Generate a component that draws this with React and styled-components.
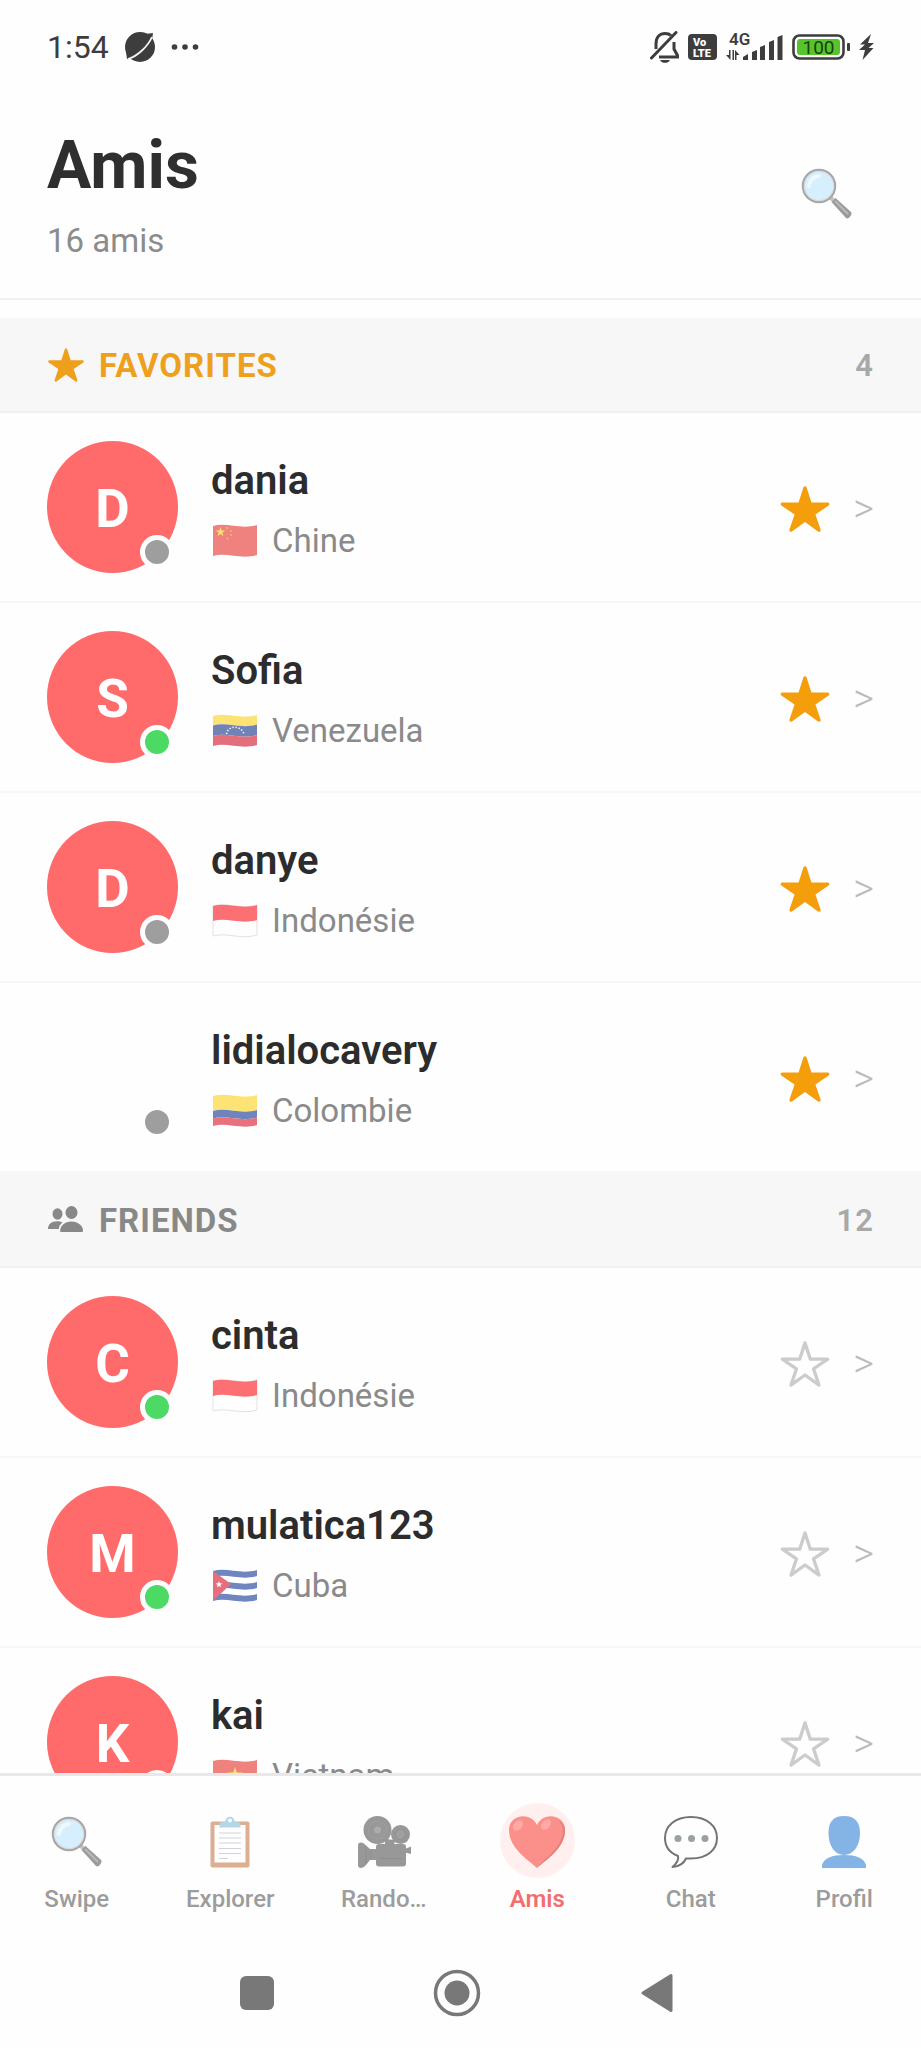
import React, { useState } from "react";
import styled, { createGlobalStyle } from "styled-components";
import { IoStar, IoStarOutline } from "react-icons/io5";

const GlobalStyle = createGlobalStyle`
  * {
    box-sizing: border-box;
  }
  body {
    margin: 0;
    background: #fefefe;
    font-family: Roboto, "Noto Sans", sans-serif;
  }
  button {
    padding: 0;
    border: none;
    background: transparent;
    font-family: inherit;
    cursor: pointer;
  }
  a {
    color: inherit;
    text-decoration: none;
  }
  svg {
    display: block;
    flex-shrink: 0;
  }
`;

const Screen = styled.div`
  display: flex;
  flex-direction: column;
  height: 100vh;
  overflow: hidden;
`;

const StatusBar = styled.div`
  display: flex;
  align-items: center;
  justify-content: space-between;
  flex-shrink: 0;
  height: 94px;
  padding: 0 47px;
  color: #3d3d3d;
`;

const StatusGroup = styled.div`
  display: flex;
  align-items: center;
  gap: ${({ $gap }) => $gap}px;
`;

const Clock = styled.time`
  font-size: 32px;
  line-height: 36px;
`;

const Header = styled.header`
  display: flex;
  align-items: center;
  justify-content: space-between;
  flex-shrink: 0;
  padding: 33px 47px 37px;
  border-bottom: 2px solid #f0f0f0;
`;

const Title = styled.h1`
  margin: 0 0 16px;
  font-size: 66px;
  font-weight: 700;
  line-height: 78px;
  color: #2f2f2f;
`;

const Subtitle = styled.p`
  margin: 0;
  font-size: 33px;
  line-height: 40px;
  color: #8c8c8c;
`;

const SearchButton = styled.button`
  display: flex;
  align-items: center;
  justify-content: center;
  width: 94px;
  height: 94px;
`;

const ListArea = styled.main`
  flex: 1;
  min-height: 0;
  padding-top: 18px;
  overflow-y: auto;
  scrollbar-width: none;
`;

const SectionHeader = styled.div`
  display: flex;
  align-items: center;
  justify-content: space-between;
  height: 95px;
  padding: 3px 47px 0;
  background: #f7f7f7;
  border-bottom: 2px solid #f0f0f0;
`;

const SectionTitle = styled.h2`
  display: flex;
  align-items: center;
  gap: 14px;
  margin: 0;
  font-size: 33px;
  font-weight: 700;
  line-height: 40px;
  text-transform: uppercase;
  letter-spacing: 1px;
  color: ${({ $color }) => $color};

  svg {
    margin-bottom: 3px;
  }
`;

const SectionCount = styled.span`
  font-size: 31px;
  font-weight: 600;
  line-height: 36px;
  letter-spacing: 1px;
  color: #a8a8a8;
`;

const List = styled.ul`
  margin: 0;
  padding: 0;
  list-style: none;
`;

const Row = styled.li`
  display: flex;
  align-items: center;
  height: 190px;
  padding: 0 47px;
  border-bottom: 2px solid #f7f7f7;
`;

const FriendLink = styled.a`
  display: flex;
  flex: 1;
  align-items: center;
  min-width: 0;
  gap: 33px;
`;

const Avatar = styled.div`
  position: relative;
  display: flex;
  align-items: center;
  justify-content: center;
  flex-shrink: 0;
  width: 131px;
  height: 132px;
  padding-top: 4px;
  border-radius: 50%;
  background: ${({ $blank }) => ($blank ? "transparent" : "#ff6b6b")};
  color: #fff;
  font-size: 53px;
  font-weight: 700;
`;

const Presence = styled.span`
  position: absolute;
  right: 4px;
  bottom: 4px;
  width: 34px;
  height: 34px;
  border: 5px solid #fefefe;
  border-radius: 50%;
  background: ${({ $online }) => ($online ? "#4cd964" : "#9e9e9e")};
`;

const Info = styled.div`
  padding-top: 3px;
`;

const Name = styled.div`
  margin-bottom: 16px;
  font-size: 40px;
  font-weight: 600;
  line-height: 48px;
  color: #2c2c2c;
`;

const Country = styled.div`
  display: flex;
  align-items: center;
  gap: 13px;
  font-size: 33px;
  line-height: 40px;
  color: #8a8a8a;
`;

const Actions = styled.div`
  display: flex;
  align-items: center;
  gap: 22px;
  padding-top: 3px;
`;

const StarButton = styled.button`
  display: flex;
  align-items: center;
  justify-content: center;
  width: 52px;
  height: 52px;
  color: ${({ $active }) => ($active ? "#f59e0b" : "#cccccc")};
`;

const Chevron = styled.span`
  font-size: 40px;
  line-height: 48px;
  font-weight: 300;
  color: #bbb;
`;

const TabBar = styled.nav`
  display: grid;
  grid-template-columns: repeat(6, 1fr);
  flex-shrink: 0;
  padding: 27px 0 24px;
  border-top: 3px solid #e8e8e8;
`;

const Tab = styled.a`
  display: flex;
  flex-direction: column;
  align-items: center;
  gap: 7px;
  font-size: 24px;
  font-weight: ${({ $active }) => ($active ? 600 : 500)};
  line-height: 28px;
  color: ${({ $active }) => ($active ? "#f0706f" : "#9c9c9c")};
`;

const TabIcon = styled.span`
  display: flex;
  align-items: center;
  justify-content: center;
  width: 75px;
  height: 75px;
  padding-top: 3px;
  border-radius: 50%;
  background: ${({ $active }) => ($active ? "#fff0ef" : "transparent")};
`;

const SystemBar = styled.div`
  display: flex;
  align-items: center;
  justify-content: center;
  flex-shrink: 0;
  gap: 140px;
  height: 111px;
  padding-right: 8px;
`;

const SystemButton = styled.button`
  display: flex;
  align-items: center;
  justify-content: center;
  width: 60px;
  height: 60px;
`;

/* status bar icons */

const PlanetIcon = () => (
  <svg width="32" height="32" viewBox="0 0 32 32">
    <circle cx="16" cy="16" r="15" fill="#3d3d3d" />
    <path d="M2 21L3 28L12 26ZM21 3L29 2L28 9Z" fill="#3d3d3d" />
    <path d="M4 28C14 25 24 15 28 6" fill="none" stroke="#f4f4f4" strokeWidth="1.8" />
  </svg>
);

const DotsIcon = () => (
  <svg width="28" height="8" viewBox="0 0 28 8" fill="#3d3d3d">
    <circle cx="3.5" cy="4" r="2.8" />
    <circle cx="14" cy="4" r="2.8" />
    <circle cx="24.5" cy="4" r="2.8" />
  </svg>
);

const MutedBellIcon = () => (
  <svg width="30" height="32" viewBox="0 0 30 32">
    <path d="M6 18V13C6 6 10 2.5 15 2.5C17.500 2.500 19.500 3 21 4.500" fill="none" stroke="#3d3d3d" strokeWidth="3" />
    <path d="M24 11V18L27.500 24.500V26H9" fill="none" stroke="#3d3d3d" strokeWidth="3" />
    <path d="M1.500 27L26 1.500" stroke="#3d3d3d" strokeWidth="3" strokeLinecap="round" />
    <path d="M10 29H20C19 31 17 31.800 15 31.800S11 31 10 29Z" fill="#3d3d3d" />
  </svg>
);

const VolteIcon = () => (
  <svg width="30" height="26" viewBox="0 0 30 26" fontFamily="Roboto, sans-serif" fontWeight="900">
    <rect width="29" height="26" rx="4" fill="#3d3d3d" />
    <text x="5" y="12" fontSize="11" fill="#fff">Vo</text>
    <text x="5" y="22.500" fontSize="11" fill="#fff">LTE</text>
  </svg>
);

const SignalIcon = () => (
  <svg width="58" height="38" viewBox="0 -4 58 38" fill="#3d3d3d">
    <text x="3" y="13" fontSize="17" fontWeight="600" fontFamily="Roboto, sans-serif">4G</text>
    <path d="M4.500 18V28L0 23H3V18ZM8 18V28H6.500V18ZM9 28V18L13.500 23H10.500V28Z" />
    <path d="M17 28V25L22 22V28Z" />
    <path d="M26 28V20L31 18V28Z" />
    <path d="M34 28V15L39 13V28Z" />
    <path d="M43 28V10L48 8V28Z" />
    <path d="M51.500 28V5L56.500 3V28Z" />
  </svg>
);

const BatteryIcon = () => (
  <svg width="59" height="26" viewBox="0 0 59 26">
    <rect x="1.500" y="1.500" width="50" height="23" rx="6" fill="#fff" stroke="#3d3d3d" strokeWidth="2.600" />
    <rect x="5" y="5" width="43" height="16" rx="3" fill="#56c52b" />
    <rect x="55" y="9" width="3" height="8" rx="1" fill="#3d3d3d" />
    <text x="26.500" y="20" fontSize="19" textAnchor="middle" fontFamily="Roboto, sans-serif" fill="#1f3d14">
      100
    </text>
  </svg>
);

const BoltIcon = () => (
  <svg width="15" height="26" viewBox="0 0 15 26">
    <path d="M12 0L1 10.500H6L0 16H6L3.500 26L14.500 14H9.500L15 9H9Z" fill="#3d3d3d" />
  </svg>
);

const PeopleIcon = () => (
  <svg width="38" height="28" viewBox="-1 0 38 28" fill="#888888">
    <ellipse cx="9.500" cy="8" rx="5" ry="5.700" />
    <ellipse cx="23.500" cy="6.500" rx="6" ry="6.500" />
    <path d="M0 23C0 18 4 15.300 9 15.300C11 15.300 13 15.800 14.500 16.500C12 18.500 11 20 10.800 23Z" />
    <path d="M12.300 26C11.500 20 17 15.500 23.500 15.500S35.500 20 35 25Q35 26 34 26Z" />
  </svg>
);

/* flags: every stripe is a band between two parallel waves */

const band = (top, bottom) =>
  `M0 ${top + 1}C14 ${top - 3} 28 ${top + 5} 44 ${top}V${bottom}C28 ${bottom + 5} 14 ${bottom - 3} 0 ${bottom + 1}Z`;

const StarShape = ({ x, y, r, fill }) => {
  const points = Array.from({ length: 10 }, (_, i) => {
    const radius = i % 2 ? r * 0.4 : r;
    const angle = (Math.PI / 5) * i - Math.PI / 2;
    return `${x + radius * Math.cos(angle)},${y + radius * Math.sin(angle)}`;
  }).join(" ");
  return <polygon points={points} fill={fill} />;
};

const flags = {
  cn: (
    <>
      <path d={band(1, 31)} fill="#ef827e" />
      <StarShape x={7.5} y={8} r={5} fill="#fbe073" />
      <circle cx="14" cy="4" r="1" fill="#f8b56f" />
      <circle cx="18" cy="7" r="1" fill="#f8b56f" />
      <circle cx="18" cy="11" r="1" fill="#f8b56f" />
      <circle cx="14.500" cy="14.500" r="1" fill="#f8b56f" />
    </>
  ),
  ve: (
    <>
      <path d={band(1, 10.5)} fill="#fce373" />
      <path d={band(10.5, 21)} fill="#7182b7" />
      <path d={band(21, 31)} fill="#e36f7d" />
      <path d="M13.500 20C15 11 28 11 31 20" fill="none" stroke="#fff" strokeWidth="1.600" strokeDasharray="1.300 1.800" />
    </>
  ),
  id: (
    <>
      <path d={band(1, 31)} fill="#fefefe" stroke="#e2e2e2" />
      <path d={band(1, 16)} fill="#fc7074" />
    </>
  ),
  co: (
    <>
      <path d={band(1, 16)} fill="#fce373" />
      <path d={band(16, 23.5)} fill="#6f83bd" />
      <path d={band(23.5, 31)} fill="#e9707d" />
    </>
  ),
  cu: (
    <>
      <path d={band(1, 31)} fill="#fefefe" />
      <path d={band(1, 7)} fill="#6f86bf" />
      <path d={band(13, 19)} fill="#6f86bf" />
      <path d={band(25, 31)} fill="#6f86bf" />
      <path d="M0 2L18 15L0 32Z" fill="#e66f7e" />
      <StarShape x={6} y={15.5} r={3.5} fill="#fff" />
    </>
  ),
  vn: (
    <>
      <path d={band(1, 31)} fill="#ef827e" />
      <StarShape x={22} y={16} r={8} fill="#fbe073" />
    </>
  ),
};

const Flag = ({ code }) => (
  <svg width="48" height="34" viewBox="-2 0 48 34">{flags[code]}</svg>
);

/* emoji style icons */

const MagnifierIcon = () => (
  <svg width="52" height="52" viewBox="0 0 52 52">
    <path d="M29 29L33 33" stroke="#c4c4c4" strokeWidth="4" />
    <path d="M30.500 34L34.500 30L50 44C52 46 47.500 52 45 50Z" fill="#9b9b9b" />
    <path d="M34 33L47 46" stroke="#b9b9b9" strokeWidth="2" />
    <circle cx="18" cy="18" r="16" fill="#d5efff" stroke="#a6a6a6" strokeWidth="2.500" />
    <circle cx="18" cy="18" r="14.700" fill="none" stroke="#d9d9d9" strokeWidth="1.200" />
    <path d="M8 18C9 12 13 8.500 18 8" fill="none" stroke="#edf9ff" strokeWidth="4" strokeLinecap="round" />
  </svg>
);

const ClipboardIcon = () => (
  <svg width="52" height="52" viewBox="0 0 52 52">
    <rect x="6.500" y="5.500" width="39" height="46" rx="2" fill="#dcae92" />
    <rect x="10.500" y="9" width="31" height="37.500" fill="#fefefe" />
    <path d="M15 17H37M15 22H37M15 27H37M15 32.500H37M15 37.500H37M15 42.500H24" stroke="#d0d4d8" strokeWidth="1.200" />
    <path d="M15.500 11.500V8Q16 6 19 6H21.500C21.500 -1 30.500 -1 30.500 6H33Q36 6 36.500 8V11.500Z" fill="#b4d5e4" />
    <circle cx="26" cy="4.500" r="2" fill="#fefefe" />
  </svg>
);

const CameraIcon = () => (
  <svg width="54" height="52" viewBox="0 0 54 52">
    <g fill="#989898">
      <circle cx="20.500" cy="14" r="14" />
      <circle cx="43.500" cy="18.500" r="9.500" />
      <path d="M28 23L38 24L37 30H28Z" />
      <rect x="19" y="28" width="30" height="22.500" rx="3" />
      <path d="M1 29Q1 26.500 4 26.500Q7 26.500 8.500 29L13 33H20V44H13L9 49Q7 52 4 52Q1 52 1 49Z" />
      <path d="M48 33L54 30.500V38L48 36.500Z" />
    </g>
    <circle cx="20.500" cy="14" r="9" fill="none" stroke="#a0a0a0" />
    <circle cx="20.500" cy="14" r="3.500" fill="#acacac" />
    <circle cx="43.500" cy="18.500" r="5" fill="#a0a0a0" stroke="#909090" />
    <path d="M9 30V48M14 34V43M22 42.500H45" stroke="#8e8e8e" />
  </svg>
);

const HeartIcon = () => (
  <svg width="58" height="52" viewBox="0 0 58 52">
    <path d="M29 52C22 45 1 33 1 14C1 -1 22 -5 29 9C36 -5 57 -1 57 14C57 33 36 45 29 52Z" fill="#fb908b" />
    <path d="M50 4C56 9 56 17 53 24C48 36 36 43 29 52C40 42 57 32 57 14C57 9 54 6 50 4Z" fill="#e2807d" />
    <ellipse cx="10" cy="9.500" rx="6" ry="4" fill="#ffaaa6" transform="rotate(-48 10 9.500)" />
    <ellipse cx="38" cy="8.500" rx="6" ry="4" fill="#ffaaa6" transform="rotate(-48 38 8.500)" />
  </svg>
);

const ChatIcon = () => (
  <svg width="54" height="52" viewBox="0 0 54 52">
    <path
      d="M27 1C11 1 1 10 1 22C1 31 6 37 14 40C15 44 12 48 8.500 51C15 51 20 47 22 42.500H27C43 42.500 53 34 53 22C53 10 43 1 27 1Z"
      fill="#fefefe"
      stroke="#747474"
      strokeWidth="2"
      strokeLinejoin="round"
    />
    <g fill="#98a2a5">
      <circle cx="14" cy="22.500" r="3.500" />
      <circle cx="27.500" cy="22.500" r="3.500" />
      <circle cx="41" cy="22.500" r="3.500" />
    </g>
  </svg>
);

const PersonIcon = () => (
  <svg width="44" height="52" viewBox="0 0 44 52" fill="#84b4e6">
    <path d="M22 0C11 0 6.500 6 6.500 17C6.500 30 13 39 22 39S38 30 38 17C38 6 33 0 22 0Z" />
    <path d="M0 52V49C2 42 10 39 22 39S42 42 44 49V52Z" />
  </svg>
);

const favorites = [
  { name: "dania", country: "Chine", flag: "cn", online: false },
  { name: "Sofia", country: "Venezuela", flag: "ve", online: true },
  { name: "danye", country: "Indonésie", flag: "id", online: false },
  { name: "lidialocavery", country: "Colombie", flag: "co", online: false, blank: true },
];

const friends = [
  { name: "cinta", country: "Indonésie", flag: "id", online: true },
  { name: "mulatica123", country: "Cuba", flag: "cu", online: true },
  { name: "kai", country: "Vietnam", flag: "vn", online: false },
];

const tabs = [
  { label: "Swipe", Icon: MagnifierIcon },
  { label: "Explorer", Icon: ClipboardIcon },
  { label: "Rando…", Icon: CameraIcon },
  { label: "Amis", Icon: HeartIcon, active: true },
  { label: "Chat", Icon: ChatIcon },
  { label: "Profil", Icon: PersonIcon },
];

const FriendRow = ({ friend, favorite }) => {
  const [starred, setStarred] = useState(favorite);

  return (
    <Row>
      <FriendLink href="#">
        <Avatar $blank={friend.blank}>
          {!friend.blank && friend.name[0].toUpperCase()}
          <Presence $online={friend.online} />
        </Avatar>
        <Info>
          <Name>{friend.name}</Name>
          <Country>
            <Flag code={friend.flag} />
            {friend.country}
          </Country>
        </Info>
      </FriendLink>
      <Actions>
        <StarButton
          $active={starred}
          aria-label="Favori"
          aria-pressed={starred}
          onClick={() => setStarred(!starred)}
        >
          {starred ? <IoStar size={52} /> : <IoStarOutline size={52} />}
        </StarButton>
        <Chevron>&gt;</Chevron>
      </Actions>
    </Row>
  );
};

const App = () => {
  return (
    <Screen>
      <GlobalStyle />
      <StatusBar>
        <StatusGroup $gap={15}>
          <Clock>1:54</Clock>
          <PlanetIcon />
          <DotsIcon />
        </StatusGroup>
        <StatusGroup $gap={8}>
          <MutedBellIcon />
          <VolteIcon />
          <SignalIcon />
          <BatteryIcon />
          <BoltIcon />
        </StatusGroup>
      </StatusBar>

      <Header>
        <div>
          <Title>Amis</Title>
          <Subtitle>16 amis</Subtitle>
        </div>
        <SearchButton aria-label="Rechercher">
          <MagnifierIcon />
        </SearchButton>
      </Header>

      <ListArea>
        <SectionHeader>
          <SectionTitle $color="#ee9f1c">
            <IoStar size={38} />
            Favorites
          </SectionTitle>
          <SectionCount>4</SectionCount>
        </SectionHeader>
        <List>
          {favorites.map((friend) => (
            <FriendRow key={friend.name} friend={friend} favorite={true} />
          ))}
        </List>
        <SectionHeader>
          <SectionTitle $color="#888888">
            <PeopleIcon />
            Friends
          </SectionTitle>
          <SectionCount>12</SectionCount>
        </SectionHeader>
        <List>
          {friends.map((friend) => (
            <FriendRow key={friend.name} friend={friend} favorite={false} />
          ))}
        </List>
      </ListArea>

      <TabBar>
        {tabs.map(({ label, Icon, active }) => (
          <Tab key={label} href="#" $active={active}>
            <TabIcon $active={active}>
              <Icon />
            </TabIcon>
            {label}
          </Tab>
        ))}
      </TabBar>

      <SystemBar>
        <SystemButton aria-label="Applications récentes">
          <svg width="34" height="34" viewBox="0 0 34 34">
            <rect width="34" height="34" rx="6" fill="#787878" />
          </svg>
        </SystemButton>
        <SystemButton aria-label="Accueil">
          <svg width="48" height="48" viewBox="0 0 48 48">
            <circle cx="24" cy="24" r="21.500" fill="none" stroke="#787878" strokeWidth="3.500" />
            <circle cx="24" cy="24" r="12.500" fill="#787878" />
          </svg>
        </SystemButton>
        <SystemButton aria-label="Retour">
          <svg width="32" height="40" viewBox="0 0 32 40">
            <path d="M2 20L30 2.500V37.500Z" fill="#787878" stroke="#787878" strokeWidth="3" strokeLinejoin="round" />
          </svg>
        </SystemButton>
      </SystemBar>
    </Screen>
  );
};

export default App;
